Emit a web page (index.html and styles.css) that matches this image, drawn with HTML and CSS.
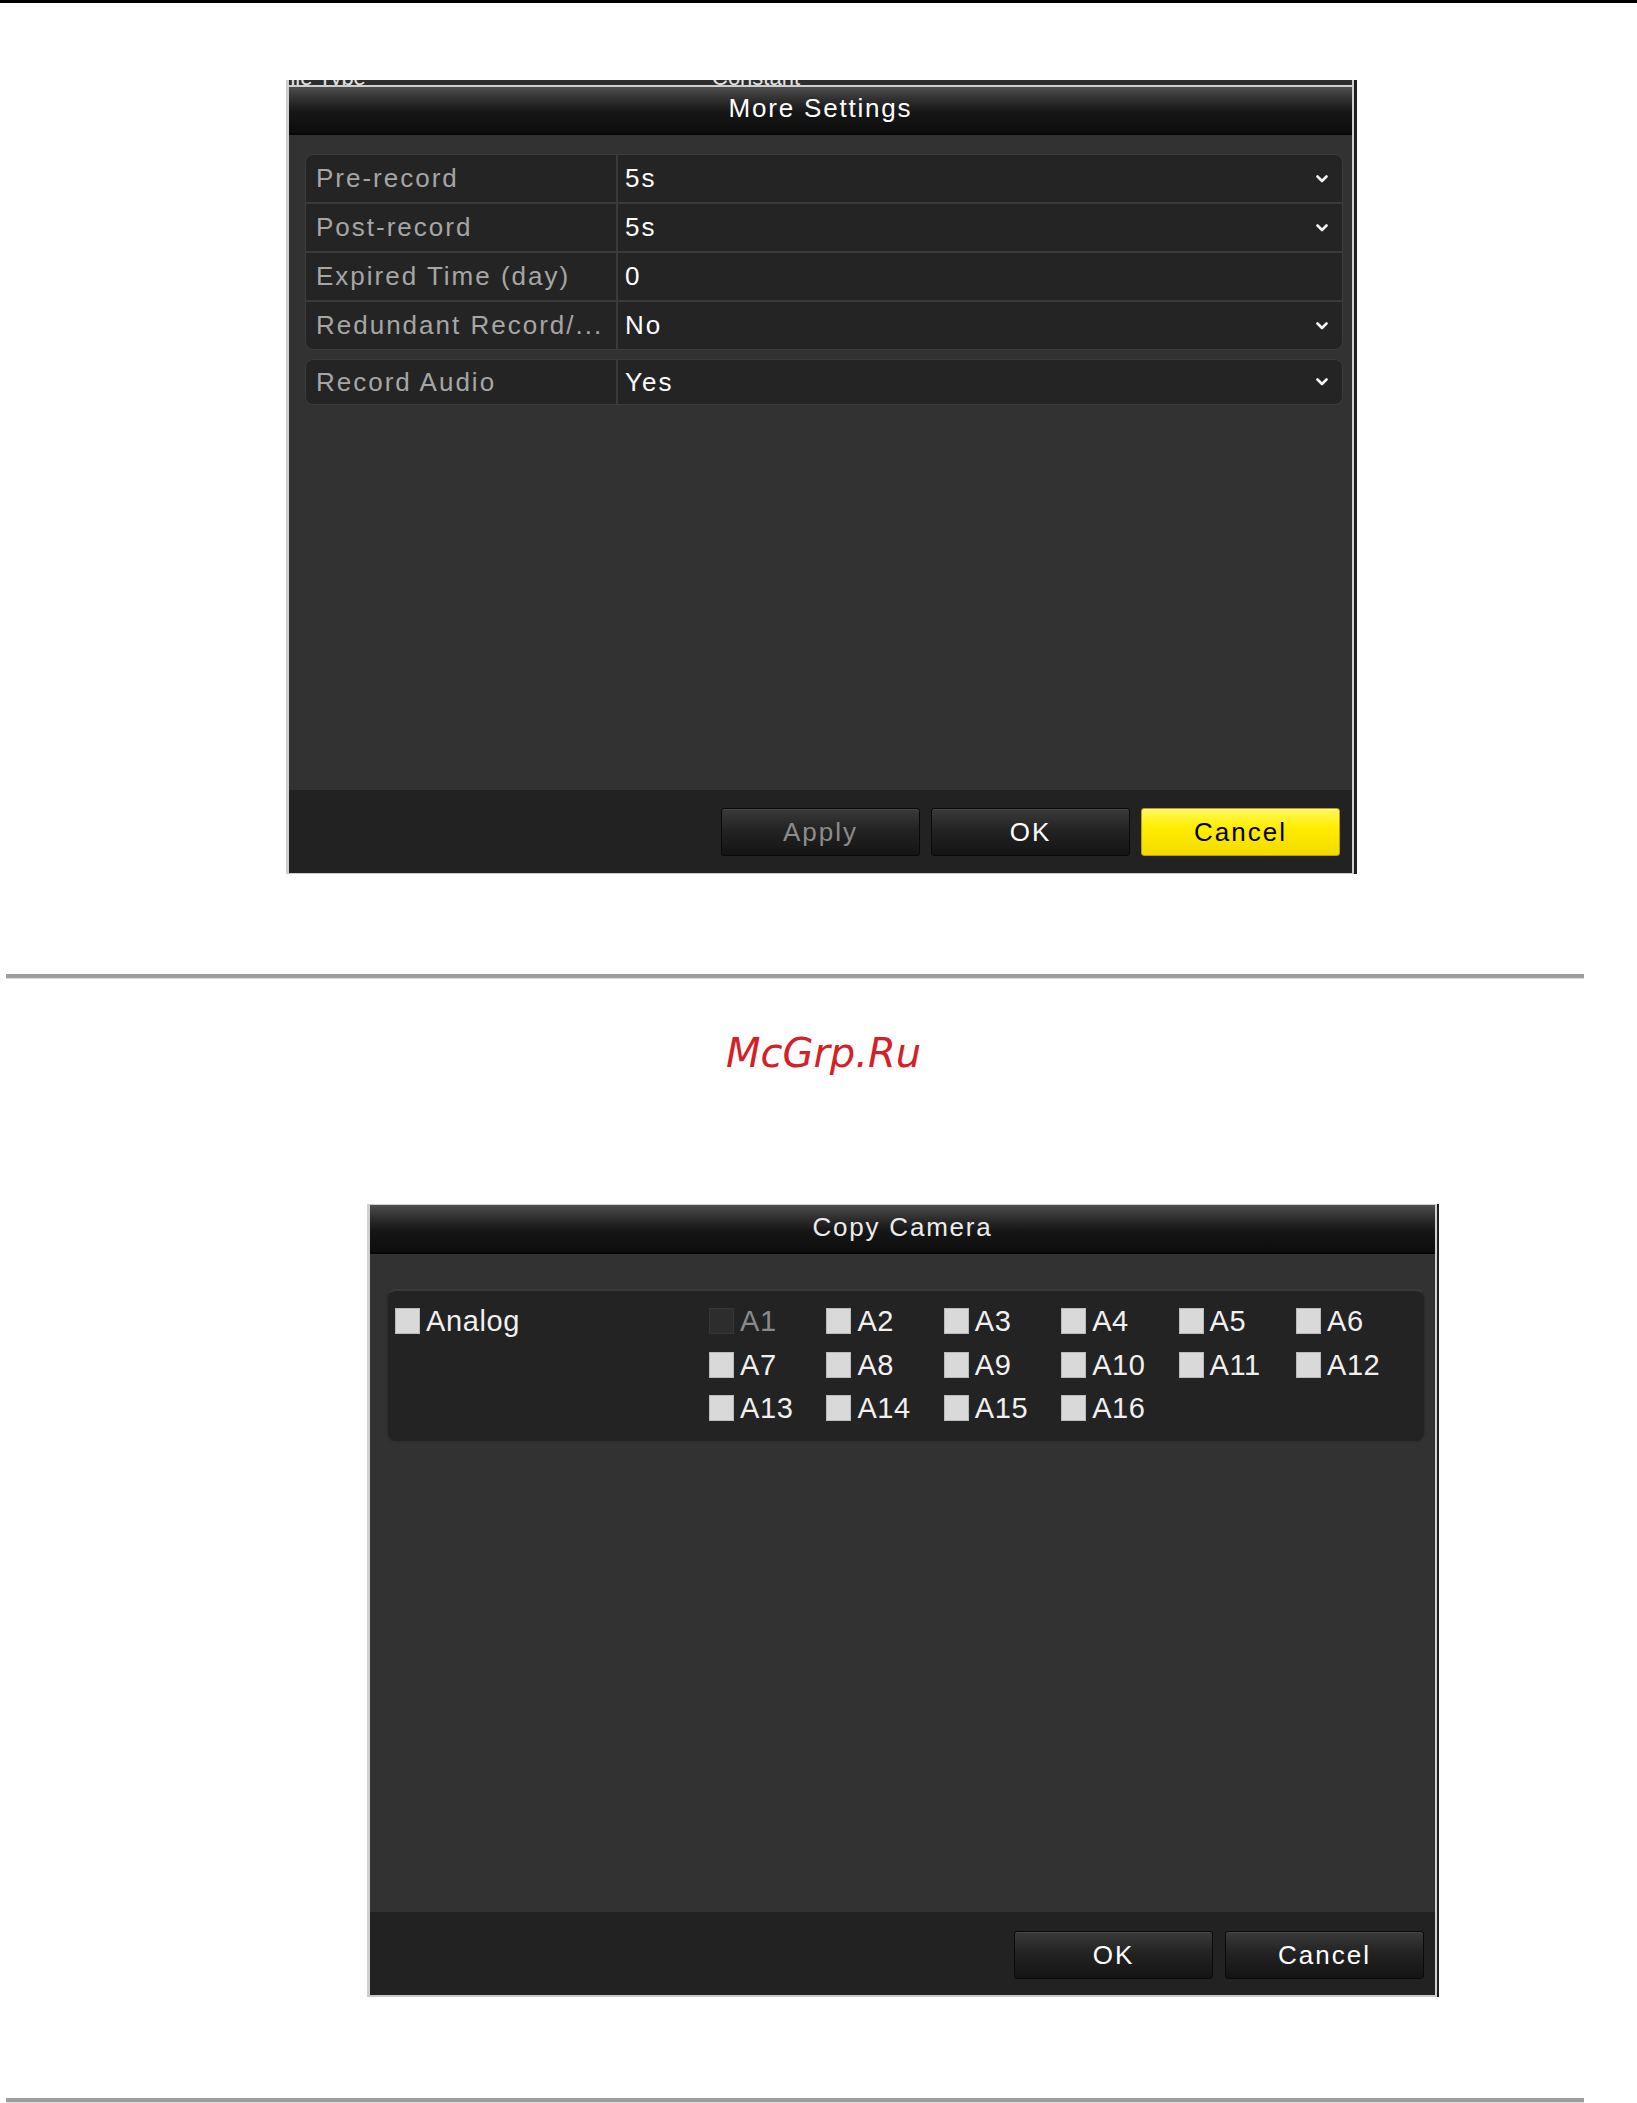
FILE: index.html
```html
<!DOCTYPE html>
<html lang="en">
<head>
<meta charset="utf-8">
<title>Record Settings</title>
<link rel="stylesheet" href="styles.css">
</head>
<body>
<div class="topline"></div>

<div class="dlg dlg-settings">
  <div class="behind"><span class="behind-a">File Type</span><span class="behind-b">Constant</span></div>
  <div class="dlg-head">More Settings</div>
  <div class="dlg-body">
    <div class="rows">
      <div class="row">
        <div class="lbl">Pre-record</div>
        <div class="val">5s<svg class="chev" width="12" height="8" viewBox="0 0 12 8"><polyline points="1.5,1.5 6,6 10.5,1.5" fill="none" stroke="#f2f2f2" stroke-width="2.6" stroke-linecap="round" stroke-linejoin="round"/></svg></div>
      </div>
      <div class="row">
        <div class="lbl">Post-record</div>
        <div class="val">5s<svg class="chev" width="12" height="8" viewBox="0 0 12 8"><polyline points="1.5,1.5 6,6 10.5,1.5" fill="none" stroke="#f2f2f2" stroke-width="2.6" stroke-linecap="round" stroke-linejoin="round"/></svg></div>
      </div>
      <div class="row">
        <div class="lbl">Expired Time (day)</div>
        <div class="val">0</div>
      </div>
      <div class="row">
        <div class="lbl">Redundant Record/...</div>
        <div class="val">No<svg class="chev" width="12" height="8" viewBox="0 0 12 8"><polyline points="1.5,1.5 6,6 10.5,1.5" fill="none" stroke="#f2f2f2" stroke-width="2.6" stroke-linecap="round" stroke-linejoin="round"/></svg></div>
      </div>
    </div>
    <div class="rows rows-single">
      <div class="row">
        <div class="lbl">Record Audio</div>
        <div class="val">Yes<svg class="chev" width="12" height="8" viewBox="0 0 12 8"><polyline points="1.5,1.5 6,6 10.5,1.5" fill="none" stroke="#f2f2f2" stroke-width="2.6" stroke-linecap="round" stroke-linejoin="round"/></svg></div>
      </div>
    </div>
  </div>
  <div class="dlg-foot">
    <button class="btn btn-dim">Apply</button>
    <button class="btn">OK</button>
    <button class="btn btn-yellow">Cancel</button>
  </div>
</div>

<div class="rule rule-mid"></div>
<div class="mark">McGrp.Ru</div>

<div class="dlg dlg-copy">
  <div class="dlg-head dlg-head-copy">Copy Camera</div>
  <div class="dlg-body dlg-body-copy">
    <div class="cams">
      <div class="all">
        <label class="cb"><span class="box"></span>Analog</label>
      </div>
      <div class="grid">
        <label class="cb off"><span class="box"></span>A1</label>
        <label class="cb"><span class="box"></span>A2</label>
        <label class="cb"><span class="box"></span>A3</label>
        <label class="cb"><span class="box"></span>A4</label>
        <label class="cb"><span class="box"></span>A5</label>
        <label class="cb"><span class="box"></span>A6</label>
        <label class="cb"><span class="box"></span>A7</label>
        <label class="cb"><span class="box"></span>A8</label>
        <label class="cb"><span class="box"></span>A9</label>
        <label class="cb"><span class="box"></span>A10</label>
        <label class="cb"><span class="box"></span>A11</label>
        <label class="cb"><span class="box"></span>A12</label>
        <label class="cb"><span class="box"></span>A13</label>
        <label class="cb"><span class="box"></span>A14</label>
        <label class="cb"><span class="box"></span>A15</label>
        <label class="cb"><span class="box"></span>A16</label>
      </div>
    </div>
  </div>
  <div class="dlg-foot dlg-foot-copy">
    <button class="btn">OK</button>
    <button class="btn">Cancel</button>
  </div>
</div>

<div class="rule rule-end"></div>
</body>
</html>
```

FILE: styles.css
```css
html, body {
  margin: 0;
  padding: 0;
  background: #ffffff;
}

body {
  font-family: "Liberation Sans", Arial, sans-serif;
  height: 2103px;
  overflow: hidden;
}

.topline {
  height: 3px;
  background: #000;
}

/* ---------- dialog frame ---------- */
.dlg {
  box-sizing: border-box;
  border-left: 3px solid #cfcfcf;
  border-right: 2px solid #cfcfcf;
  background: #323232;
}

.dlg-settings {
  width: 1068px;
  margin: 77px 0 0 286px;
  border-bottom: 1px solid #c8c8c8;
  box-shadow: 3px 0 0 #1e1e1e;
}

.dlg-copy {
  width: 1070px;
  margin: 127px 0 0 367px;
  border-top: 1px solid #cfcfcf;
  border-bottom: 2px solid #c8c8c8;
  box-shadow: 2px 0 0 #1e1e1e;
}

/* sliver of the screen underneath the settings popup */
.behind {
  height: 5px;
  display: flex;
  align-items: flex-end;
  overflow: hidden;
  background: #2e2e2e;
  border-bottom: 2px solid #cfcfcf;
  color: #e2e2e2;
  font-size: 22px;
  line-height: 14px;
  white-space: nowrap;
}

.behind-a {
  flex: 0 0 435px;
  margin-left: -12px;
}

/* ---------- title bar ---------- */
.dlg-head {
  box-sizing: border-box;
  height: 48px;
  padding-bottom: 3px;
  display: flex;
  align-items: center;
  justify-content: center;
  color: #ffffff;
  font-size: 26px;
  letter-spacing: 1.8px;
  background: linear-gradient(#4e4e4e 0%, #2c2c2c 30%, #161616 55%, #0d0d0d 100%);
  border-bottom: 2px solid #060606;
}

.dlg-head-copy {
  height: 49px;
  color: #ececec;
}

/* ---------- body ---------- */
.dlg-body {
  box-sizing: border-box;
  height: 655px;
  padding: 19px 9px 0 16px;
  background: #323232;
}

.dlg-body-copy {
  height: 658px;
  padding-top: 35px;
}

.rows {
  border: 1px solid #3c3c3c;
  border-radius: 8px;
  background: #242424;
  overflow: hidden;
}

.rows + .rows {
  margin-top: 9px;
}

.row {
  display: flex;
  height: 47px;
}

.rows-single .row {
  height: 44px;
}

.row + .row {
  border-top: 2px solid #3a3a3a;
}

.lbl,
.val {
  display: flex;
  align-items: center;
  font-size: 26px;
  letter-spacing: 2px;
  white-space: nowrap;
}

.lbl {
  box-sizing: border-box;
  flex: 0 0 312px;
  padding-left: 10px;
  border-right: 2px solid #3a3a3a;
  color: #a6a6a6;
}

.val {
  flex: 1;
  padding: 0 14px 0 7px;
  color: #ffffff;
}

.chev {
  margin-left: auto;
  display: block;
}

/* ---------- camera check group ---------- */
.cams {
  box-sizing: border-box;
  height: 154px;
  display: flex;
  padding: 17px 0 0 7px;
  border: 2px solid #2e2e2e;
  border-top-color: #3a3a3a;
  border-radius: 10px;
  background: #232323;
}

.all {
  flex: 0 0 314px;
}

.grid {
  display: grid;
  grid-template-columns: repeat(6, 117.4px);
  grid-auto-rows: 43.5px;
}

.cb {
  display: flex;
  align-items: flex-start;
  gap: 6px;
  font-size: 29px;
  line-height: 26px;
  letter-spacing: 0.6px;
  color: #f0f0f0;
  white-space: nowrap;
}

.box {
  flex: none;
  width: 25px;
  height: 26px;
  background: #d9d9d9;
  box-shadow: inset 0 0 0 1px #bababa;
}

.cb.off {
  color: #8a8a8a;
}

.cb.off .box {
  background: #2d2d2d;
  box-shadow: inset 0 0 0 1px #363636;
}

/* ---------- button bar ---------- */
.dlg-foot {
  box-sizing: border-box;
  height: 83px;
  display: flex;
  justify-content: flex-end;
  align-items: flex-start;
  gap: 11px;
  padding: 18px 12px 0 0;
  background: #222222;
}

.dlg-foot-copy {
  padding: 19px 11px 0 0;
  gap: 12px;
}

.btn {
  width: 199px;
  height: 48px;
  padding: 0;
  border: 1px solid #0a0a0a;
  border-radius: 3px;
  background: linear-gradient(#3a3a3a 0%, #232323 45%, #141414 100%);
  box-shadow: inset 0 1px 0 #474747;
  color: #ffffff;
  font-family: "Liberation Sans", Arial, sans-serif;
  font-size: 26px;
  letter-spacing: 2px;
}

.btn-dim {
  color: #8c8c8c;
}

.btn-yellow {
  background: linear-gradient(#fff75e 0%, #ffee00 40%, #f4da00 100%);
  border-color: #b9a200;
  box-shadow: inset 0 1px 0 #fffbb0;
  color: #000000;
}

/* ---------- page furniture ---------- */
.rule {
  width: 1578px;
  height: 4px;
  margin-left: 6px;
  background: #9e9e9e;
  border-bottom: 1px solid #dcdcdc;
}

.rule-mid {
  margin-top: 100px;
}

.rule-end {
  margin-top: 101px;
}

.mark {
  margin-top: 50px;
  padding-left: 10px;
  height: 48px;
  line-height: 48px;
  text-align: center;
  font-family: "DejaVu Sans", Verdana, sans-serif;
  font-style: italic;
  font-size: 40px;
  color: #d42027;
}
```
